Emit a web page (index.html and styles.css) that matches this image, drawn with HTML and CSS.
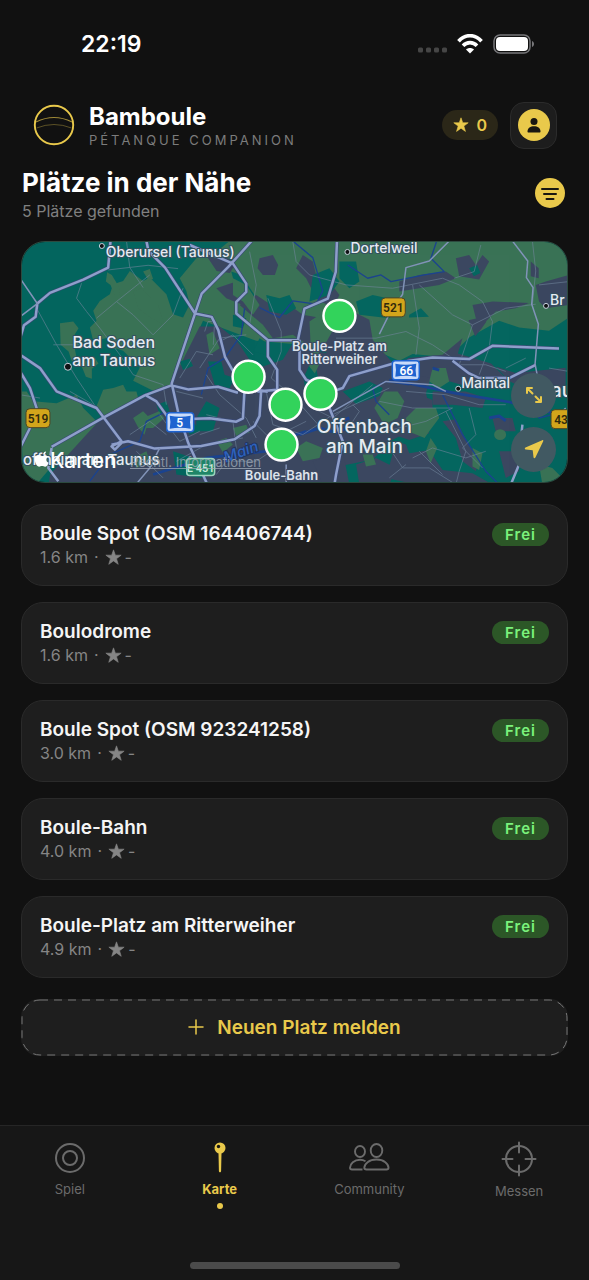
FILE: index.html
```html
<!DOCTYPE html>
<html lang="de">
<head>
<meta charset="utf-8">
<meta name="viewport" content="width=device-width, initial-scale=1">
<title>Bamboule – Plätze in der Nähe</title>
<link rel="stylesheet" href="styles.css">
</head>
<body>
<svg width="0" height="0" class="defs" aria-hidden="true">
  <symbol id="star" viewBox="0 0 16 16"><path d="M8 .8l1.75 5H15.2l-4.35 3.3 1.6 5.3L8 11.2l-4.450 3.2 1.6-5.300L.8 5.800h5.450z" fill="currentColor" stroke="currentColor" stroke-width=".6" stroke-linejoin="round"/></symbol>
</svg>

<div class="status">
  <span class="time">22:19</span>
  <div class="status-icons">
    <svg class="signal" width="30" height="6" viewBox="0 0 30 6" fill="#464646"><rect x="1" y=".5" width="5" height="5" rx="1.500"/><rect x="9" y=".5" width="5" height="5" rx="1.500"/><rect x="17" y=".5" width="5" height="5" rx="1.500"/><rect x="25" y=".5" width="5" height="5" rx="1.500"/></svg>
    <svg width="26" height="20" viewBox="0 0 26 20" fill="none" stroke="#fff" stroke-width="3.600"><path d="M1.500 7.200C8-.2 18 -.2 24.500 7.200M6 11.800c4-4.200 10-4.200 14 0"/><path d="M13 19.500l-4-4.100c2.300-2 5.700-2 8 0z" fill="#fff" stroke="none"/></svg>
    <svg width="42" height="20" viewBox="0 0 42 20"><rect x="1" y="1" width="36" height="18" rx="6" fill="none" stroke="#77777a" stroke-width="1.500"/><rect x="3" y="3" width="32" height="14" rx="4" fill="#fff"/><path d="M39 7c2.700 1 2.700 5 0 6z" fill="#77777a"/></svg>
  </div>
</div>

<header class="header">
  <svg class="logo" width="42" height="42" viewBox="0 0 42 42" fill="none" stroke="#e9c94b"><circle cx="21" cy="21" r="19.200" stroke-width="1.900"/><path d="M3 18q18-9 36 0" stroke-width="1.200" opacity=".65"/><path d="M3.500 24q17.500-7 35 0" stroke-width="1" opacity=".35"/></svg>
  <div class="brand">
    <div class="brand-name">Bamboule</div>
    <div class="brand-sub">PÉTANQUE COMPANION</div>
  </div>
  <div class="points"><svg width="16" height="16"><use href="#star"/></svg><span>0</span></div>
  <button class="profile" aria-label="Profil">
    <svg width="34" height="34" viewBox="0 0 34 34"><circle cx="17" cy="17" r="16" fill="#e9c94b"/><circle cx="17" cy="13.500" r="3.500" fill="#181711"/><path d="M10.500 23.500c0-3.400 3-5.200 6.500-5.200s6.500 1.800 6.500 5.200c0 .6-.4 1-1 1h-11c-.6 0-1-.4-1-1z" fill="#181711"/></svg>
  </button>
</header>

<main class="main">
  <div class="heading">
    <div>
      <h1>Plätze in der Nähe</h1>
      <p>5 Plätze gefunden</p>
    </div>
    <button class="filter" aria-label="Filter">
      <svg width="30" height="30" viewBox="0 0 30 30"><circle cx="15" cy="15" r="15" fill="#e9c94b"/><path d="M7 11h16M9 16h12M11.500 21h7" stroke="#181711" stroke-width="2" stroke-linecap="round"/></svg>
    </button>
  </div>

  <section class="map" aria-label="Karte">
    <svg class="map-canvas" viewBox="0 1 546 240" preserveAspectRatio="xMidYMid slice">
      <g transform="translate(-2 -6) scale(.33333)">
        <rect width="1660" height="760" fill="#04665f"/>
        <g fill="#3a7256">
          <path d="M480 130l50-60 60-20 40-32h420v310H830l-120-10-160-60-40 90-60 110-50 10-60-30 20-40-50-50-30-10-10-30-50 10-10-40 20-20-10-30 20-30 30-20 10-30 30-10 20-30 40 30 20-10 50 50 20 60 30 10 20-40-10-40z"/>
          <path d="M262 112l14 8 24 40-2 20-14 0-12-30-14-10zM340 170l25-10 50 50 20 60-40-20-40-30zM120 265l40-5 16 20-12 20 12 30-14-4 8 44-14 10-10-30-24-20zM182 386l40-20 14 20-20 16 0 30-18-6zM370 110l20-8 10 30-14 4z"/>
          <path d="M0 470l20 0 20 30 70 6 60-26 20 40 40 40 30 40-160 90-60 70-30-20zM280 460l30-10 10 20 30 0 10 40-60 30-50 5-20-30 20-50zM120 720l60-10 30 40h-90z"/>
          <path d="M1020 18h610l20 30v200l-60 40-90-10-60-20-90 50-60 60-110-10-40 20-70-30-50 10z"/>
        </g>
        <g fill="#3b4760">
          <path d="M250 545l200-90 50-100 40-80 60 0 50 40 40 60 40 20 60-20 30-50 40 20 60 10 30-110 40-20 60 30 10 60 60 70 80 0 40 30-20 60 20 80-120 60-60 60-100 20-40 40 40 65H80l10-80z"/>
          <path d="M545 40l40 30 40 0 20 20-14 24-40-6-20-30zM720 70l40-10 16 30-10 30-36 0-16-20zM590 160l60-20 40 30-20 40-50-20zM660 210l50-30 60 40 40-10 40 30 60 10 40-20 40 20-30 80-80 10-60-40-60 10-30-40zM850 60l30 20 10 40 40 20 30 40-20 40-50-30-30-60-30-30zM1140 140l60-20 80-10 30 20-50 20-120 20zM1310 70l40-10 20 30 20-30 20 20-30 54-60-10z"/>
          <path d="M1360 210l60-10 110 4-40 16-60 10-30 30-30-10zM1348 256l26-6 28 10-14 20-20 24zM1535 80l24 20 0 30-24-6zM1550 150l30-10 70-20v90l-70 10-20-20zM1270 360l60-50-14 46 100 30 40 40-30 34-100-10-70-20-110-10 20-50zM1040 440l70 30 80 6 50 20 0 40-40 20 30 40-60 20-60-20-30 60-60-40-90-10-40-50 40-70z"/>
          <path d="M880 680l90-30 20 100h-80zM1010 690l60-20 60 30-20 50h-90zM1130 620l30 10 10 26 60-10 40 60 90 10 60 34h-230l-90-20zM1270 560l40-6 40 80 30 30-10 46-40-30-20-70zM1420 550l60 0 10 40-60 0zM1240 470l100 0 60 20-10 30-90-10-60 0zM1430 395l60 20 150-16v60l-110 10-60-30zM1440 650l60 0 0 60-40 20z"/>
        </g>
        <g fill="#04665f">
          <path d="M635 110l30 10 40 60-10 20-40-14zM640 240l40 10-10 30-30-6zM740 180l40 10 30-10 20 40-30 20-50-10zM880 120l50-20 30 40-30 40-60 20zM565 380l40 0 10 40 30 10-20 40-40-20zM560 500l40 20-20 70-50 0 0-40zM1060 180l90 20-40 50-90-10-10-40zM460 650l60 20 30 60-80-10zM970 470l80-30 40 20-10 24-70 24zM1170 240l35-20 24 26-60 2zM480 380l30-8 10 22-30 12zM870 390l20 10 10 50-40 30-8-50zM960 80l50 0 10 60-30 20-30-30zM1350 100l24-10 10 24-20 10zM720 310l30 20-10 30-40-10zM410 510l30-10 10 30-30 10zM500 570l20-10 20 30-30 10z"/>
        </g>
        <g fill="#3a7256">
          <path d="M340 550l30-20 14 14 34-14 16 20-34 30-20 0-6 20-20-24zM640 130l40 20 40 60-20 30-30-40-30-20zM870 260l60-40 20 50-40 70-36 0zM866 360l30-14 10 30-20 40-16-20zM560 300l20-10 20 50-30 20zM590 620l30-10 20 20-30 24zM1065 520l30-50 40 0 20 30-20 50-40 20zM1160 550l30-30 60 0 10 30-30 40-14 20-50-20zM1220 650l14-40 20 30-20 46zM1030 660l30 0 10 30-30 6zM830 640l30-20 50 20-10 30-50 10zM640 580l40-10 10 24-40 10zM1425 600a18 16 0 1 1 36 0 18 16 0 0 1-36 0zM1560 690l40 10 30 30-60 20zM1360 640l30 16-10 50-20-10zM1240 400l40 0 10 40-30 20-30-20zM340 670l40-20 10 30-40 20z"/>
        </g>
        <g fill="none" stroke="#1b438f" stroke-width="4" stroke-linejoin="round">
          <path d="M820 18l60 50 30 100-20 40-70-10-40 50-60-30M985 90l60 40 40-10 30 20 100-20 60-10-40-40 20-60M545 480l20-80 50-30 50-70 10-80M210 740l60-80 90-40 20-60 60-30M1270 480l60 120 70 110 40 40M1600 540l-40 10-40-60M1110 540l-40-40-10-40 40-20 70 10"/>
          <path d="M400 720l160-50 180-20 60-40 60-20" stroke-width="8"/>
          <path d="M1110 436l60 10 140 30 160 26 160 40" stroke-width="8"/>
          <path d="M840 600l60-20 50 14 80-34M930 570l60-20M1410 550l30-6 20 14M1240 400l20 6" stroke-width="9"/>
        </g>
        <g fill="none" stroke="#71869d" stroke-width="2.500" stroke-linejoin="round" opacity=".7">
          <path d="M185 145l-15 45 30 40 40 50 60 80 40 60 90 30 10 60M50 220l60 110 60 100 60 90M265 105l120-14 90 10M230 250l60-50 100-80M290 200l50 40 60 60 60-60 30-80M320 18l10 80 40 60M100 330l80 0M0 480l60 10M150 470l70 40"/>
          <path d="M820 20l10 60 40 40 110 30 140 10 150-30 50 20 70 50 30 60-10 80-30 80M690 50l20 100-20 120 60 50M745 190l40 100 0 60-30 80 70 60 80 90M1200 150l100 90 60 30-20 60-20 60 80 0 60 20M1360 270l100-50 90-12M1180 150l20 130-10 80M1385 30l-20 80-60 20M950 310l120 0 90-20 80 40 60 40M540 400l60-90 80-10M560 420l40 60 80 70 30 60M740 470l20 100 90 30 90-60 170-80M880 520l60 30 120-100M1000 510l20 20-20 30 20 30M420 540l60 80 60-30M330 600l60-40 50 40M470 680l90-50 110-20M560 540l80 20 10 80-60 80M700 560l60 60 60-10M555 290l10-30 20 0-4 70M600 320l40-20 60 60"/>
          <path d="M1160 470l120 10 100 30 80 0M1080 500l100 20 120 0-80 40-120 30M1350 520l20 80-40 40 60 60M1280 530l60 120-20 60-10 40M1200 650l70 70M1180 670l60-30 100 30 60-20M1110 640l40 60 80 0 80 50M1160 690l-50 40M1520 370l-60 30M1540 18l10 90-10 100M1560 150l90-10M1590 400l60 10M470 470l80 20M480 430l50-80 50 10M600 580l-60 20M350 650l80 80M620 680l90 0 60-40M800 590l60-30"/>
        </g>
        <g fill="none" stroke-linejoin="round">
          <path stroke="#3a4a76" stroke-width="11" d="M272 18l-7 80-75 36-100 40-38 32-5 40-35 25-12 40M380 18l6 30 50 50 90 138-70 210 20 90 30 90 60 130M526 236l20-60 80-80 70-78M510 30l130 56 40 60 0 25-30 30 0 35 95 80h90l20-95 70-30 24-80 6-155M526 236l50 10 20 40 20 80 40 70M745 315l0 50 28 40 0 60-60 5M455 452l-80 30-130 70-150 85M0 360l60 40 50 70 120 50 75 100M375 480l35 20 40 55 120-4 80 10 20-10 5-90 70 10M275 630l50-10 80 22 140-8 100-20 60-40 15-30 5-80M0 640l30-60 20-60-20-60-30-50M840 315l0 90 20 30 80 35 30-10 20-36 140-40 110-16 110 5 70-40 200 8M1300 378l50 38 30 14 90 0 80-40M930 520l40 100-20 100-5 30M455 452l50 12 90-8 60 18"/>
          <path stroke="#8e9fca" stroke-width="7.500" d="M272 18l-7 80-75 36-100 40-38 32-5 40-35 25-12 40M380 18l6 30 50 50 90 138-70 210 20 90 30 90 60 130M526 236l20-60 80-80 70-78M510 30l130 56 40 60 0 25-30 30 0 35 95 80h90l20-95 70-30 24-80 6-155M526 236l50 10 20 40 20 80 40 70M745 315l0 50 28 40 0 60-60 5M455 452l-80 30-130 70-150 85M0 360l60 40 50 70 120 50 75 100M375 480l35 20 40 55 120-4 80 10 20-10 5-90 70 10M275 630l50-10 80 22 140-8 100-20 60-40 15-30 5-80M0 640l30-60 20-60-20-60-30-50M840 315l0 90 20 30 80 35 30-10 20-36 140-40 110-16 110 5 70-40 200 8M1300 378l50 38 30 14 90 0 80-40M930 520l40 100-20 100-5 30M455 452l50 12 90-8 60 18M1510 570l-4 40M1500 690l-25 60M310 620l-25 25-10-10 30-15M95 640l-10 60 30 40"/>
          <path stroke="#8193b8" stroke-width="4.500" d="M1290 18l-60 60-70 20-10 80-40 60-30 60M1480 18l46 60-4 50 20 30-4 50 20 60-10 120 10 50M0 130l52 76-52 40M940 530l160-90 140 10 40 20M1600 560l40-40M340 760l50-60 30-60M800 690l0 60"/>
        </g>
      </g>

      <g class="shield">
        <rect x="4" y="168" width="24" height="19" rx="4" fill="#d3a51b" stroke="#4c4526"/><text x="16" y="182" fill="#322b0c">519</text>
        <rect x="360" y="57" width="24" height="19" rx="4" fill="#d3a51b" stroke="#4c4526"/><text x="372" y="71" fill="#322b0c">521</text>
        <rect x="530" y="169" width="24" height="19" rx="4" fill="#d3a51b" stroke="#4c4526"/><text x="540" y="183" fill="#322b0c">43</text>
        <rect x="145" y="172" width="27" height="19" rx="3" fill="#c9dbfa" stroke="#1e63d0" stroke-width="1.500"/><path d="M148 175q10.500 2 21 0q-1.500 7 0 13q-10.500-2-21 0q1.500-6 0-13z" fill="#1e63d0"/><text x="158" y="186" fill="#fff">5</text>
        <rect x="371" y="120" width="27" height="19" rx="3" fill="#c9dbfa" stroke="#1e63d0" stroke-width="1.500"/><path d="M374 123q10.500 2 21 0q-1.500 7 0 13q-10.500-2-21 0q1.500-6 0-13z" fill="#1e63d0"/><text x="385" y="134" fill="#fff">66</text>
        <rect x="165" y="218" width="28" height="17" rx="3" fill="#1f8567" stroke="#9bd5be" stroke-width="1.500"/><text class="euro" x="179" y="231" fill="#c4ecdc">E 451</text>
      </g>
      <g fill="#101114" stroke="#c8d2dd"><circle cx="80" cy="5" r="2.500"/><circle cx="46" cy="126" r="3.500"/><circle cx="326" cy="11" r="2.500"/><circle cx="525" cy="65" r="2.500"/><circle cx="437" cy="148" r="2.500"/></g>
      <g class="places">
        <text x="84" y="16">Oberursel (Taunus)</text>
        <text x="329" y="12">Dortelweil</text>
        <text x="529" y="64">Br</text>
        <text x="440" y="147">Maintal</text>
        <text class="hofheim" x="1" y="224">offheim am Taunus</text>
        <g class="town"><text x="92" y="107">Bad Soden</text><text x="92" y="125">am Taunus</text></g>
        <g class="city"><text x="343" y="192">Offenbach</text><text x="343" y="212">am Main</text></g>
        <text class="city" x="541" y="156">au</text>
        <text class="river" x="221" y="216" transform="rotate(-20 221 216)">Main</text>
      </g>
      <g class="pins">
        <circle cx="318" cy="75" r="16"/><circle cx="227" cy="136" r="16"/><circle cx="299" cy="153" r="16"/><circle cx="264" cy="164" r="16"/><circle cx="260" cy="204" r="16"/>
      </g>
      <g class="pin-labels"><text x="318" y="110">Boule-Platz am</text><text x="318" y="123">Ritterweiher</text><text x="260" y="239">Boule-Bahn</text></g>
      <path d="M24 215c.5-2 1.500-3 3-3 0 2-1.200 3-3 3zm-1 1.500c1.500 0 2-1 3.500-.800 1 .1 2 .6 2.600 1.500-2.600 1.800-2 5 .6 6-.8 2-2 4-3.600 4-1.200 0-1.700-.7-3-.7s-1.900.7-3 .7c-3 0-6-8-3.300-10.700 2-2 4-.8 6.200 0z" fill="#fff" transform="translate(-3 -1)"/>
      <text class="karten" x="28" y="227">Karten</text>
    </svg>
    <a class="legal" href="#info">Rechtl. Informationen</a>
    <div class="map-controls">
      <button aria-label="Karte vergrößern"><svg width="20" height="20" viewBox="0 0 20 20" fill="none" stroke="#e9c94b" stroke-width="2" stroke-linecap="round" stroke-linejoin="round"><path d="M3 8V3h5M3.500 3.500l5 5M17 12v5h-5M11.500 11.500l5 5"/></svg></button>
      <button aria-label="Mein Standort"><svg width="22" height="22" viewBox="0 0 22 22" fill="#e9c94b"><path d="M19.200 2.200L2.500 9.600c-1 .5-.9 1.800.2 1.900l7 .8.800 7c.2 1.100 1.400 1.200 1.900.2l7.800-16.300c.4-.8-.3-1.300-1-1z"/></svg></button>
    </div>
  </section>

  <ul class="list">
    <li class="card"><div><h2>Boule Spot (OSM 164406744)</h2><p>1.6 km <b>·</b> <svg width="17" height="17"><use href="#star"/></svg> -</p></div><span class="badge">Frei</span></li>
    <li class="card"><div><h2>Boulodrome</h2><p>1.6 km <b>·</b> <svg width="17" height="17"><use href="#star"/></svg> -</p></div><span class="badge">Frei</span></li>
    <li class="card"><div><h2>Boule Spot (OSM 923241258)</h2><p>3.0 km <b>·</b> <svg width="17" height="17"><use href="#star"/></svg> -</p></div><span class="badge">Frei</span></li>
    <li class="card"><div><h2>Boule-Bahn</h2><p>4.0 km <b>·</b> <svg width="17" height="17"><use href="#star"/></svg> -</p></div><span class="badge">Frei</span></li>
    <li class="card"><div><h2>Boule-Platz am Ritterweiher</h2><p>4.9 km <b>·</b> <svg width="17" height="17"><use href="#star"/></svg> -</p></div><span class="badge">Frei</span></li>
  </ul>

  <button class="report">
    <svg class="dashes" aria-hidden="true"><rect width="100%" height="100%" rx="18"/></svg>
    <svg width="16" height="16" viewBox="0 0 16 16" stroke="#e9c94b" stroke-width="1.500" stroke-linecap="round"><path d="M8 1v14M1 8h14"/></svg>
    Neuen Platz melden
  </button>
</main>

<nav class="tabs">
  <div class="tab-row">
    <a href="#spiel"><svg width="34" height="34" viewBox="0 0 34 34" fill="none" stroke="currentColor" stroke-width="2"><circle cx="17" cy="17" r="14"/><circle cx="17" cy="17" r="7"/></svg>Spiel</a>
    <a class="active" href="#karte" aria-current="page"><svg width="34" height="34" viewBox="0 0 34 34"><circle cx="17" cy="7" r="5.500" fill="currentColor"/><circle cx="15.500" cy="5.500" r="1.700" fill="#181711"/><path d="M15.500 12h3l-.4 18c0 1.800-2.200 1.800-2.200 0z" fill="currentColor"/></svg>Karte<i class="dot"></i></a>
    <a href="#community"><svg width="42" height="34" viewBox="0 0 42 34" fill="none" stroke="currentColor" stroke-width="1.900"><ellipse cx="12" cy="10.500" rx="5" ry="5.500"/><ellipse cx="28.500" cy="9.500" rx="5.800" ry="6.500"/><path d="M14.500 28.500H4c-1.500 0-2-.7-2-1.700 0-4 4.200-8 10-8 2.200 0 4 .5 5.500 1.400M18.500 28.500c-1.500 0-2.200-.7-2.200-1.700 0-4 4.700-8.300 12.200-8.300s12 4.300 12 8.300c0 1-.7 1.700-2 1.700z"/></svg>Community</a>
    <a href="#messen"><svg width="36" height="36" viewBox="0 0 36 36" fill="none" stroke="currentColor" stroke-width="2" stroke-linecap="round"><circle cx="18" cy="18" r="13"/><path d="M18 1.500v10M18 24.500v10M1.500 18h10M24.500 18h10"/></svg>Messen</a>
  </div>
</nav>
<div class="home"><span></span></div>
</body>
</html>
```

FILE: styles.css
```css
* { box-sizing: border-box; }

body {
  margin: 0;
  min-height: 100vh;
  display: flex;
  flex-direction: column;
  background: #111;
  color: #fff;
  font-family: Inter, "Liberation Sans", sans-serif;
}

h1, h2, p, ul { margin: 0; padding: 0; }
svg { display: block; flex: none; }
button { border: 0; padding: 0; background: none; font: inherit; color: inherit; }
a { color: inherit; text-decoration: none; }
.defs { position: absolute; }

.status {
  display: flex;
  justify-content: space-between;
  align-items: center;
  height: 88px;
  padding: 0 54px 0 81px;
}
.time { font-size: 23px; font-weight: 600; }
.status-icons { display: flex; align-items: center; gap: 10px; }
.signal { align-self: flex-end; margin-bottom: 1px; }

.header {
  display: flex;
  align-items: center;
  height: 74px;
  padding: 0 32px 0 33px;
}
.brand { margin-left: 14px; flex: 1; padding-top: 1px; }
.brand-name { font-size: 24px; line-height: 28px; font-weight: 700; }
.brand-sub { font-size: 13px; line-height: 18px; letter-spacing: 3px; color: #7c7c7c; }
.points {
  display: flex;
  align-items: center;
  gap: 7px;
  height: 30px;
  padding: 0 11px;
  border-radius: 15px;
  background: #2b2718;
  color: #e9c94b;
  font-size: 16px;
  font-weight: 600;
}
.profile {
  display: grid;
  place-items: center;
  width: 47px;
  height: 47px;
  margin-left: 12px;
  border: 1px solid #2b2b2b;
  border-radius: 14px;
  background: #1d1d1d;
}

.main { flex: 1; padding: 4px 21px 0; }
.heading {
  display: flex;
  justify-content: space-between;
  align-items: center;
  padding: 0 3px 0 1px;
  margin-bottom: 18px;
}
.heading h1 { font-size: 26px; line-height: 34px; font-weight: 700; }
.heading p { font-size: 16px; line-height: 23px; color: #808080; }
.filter { margin-bottom: 3px; }

.map {
  position: relative;
  overflow: hidden;
  border: 1px solid #2c4a3f;
  border-radius: 24px;
  margin-bottom: 21px;
}
.map-canvas { width: 100%; height: auto; }
.shield text { font-size: 12px; font-weight: 600; text-anchor: middle; font-family: Roboto, sans-serif; }
.shield .euro { font-size: 11px; }
.places { font-size: 14px; font-weight: 500; fill: #e6ebf2; paint-order: stroke; stroke: #34505f; stroke-width: 2px; }
.places .hofheim { font-size: 15px; }
.places .town { font-size: 16px; text-anchor: middle; }
.places .city { font-size: 19px; text-anchor: middle; }
.places .river { font-size: 15px; font-style: italic; fill: #2d62bd; stroke: #22345f; text-anchor: middle; }
.pins circle { fill: #32d35b; stroke: #fff; stroke-width: 2.500px; }
.pin-labels { font-size: 13px; font-weight: 600; fill: #dde3ec; text-anchor: middle; paint-order: stroke; stroke: #3c4963; stroke-width: 2px; }
.karten { font-size: 21px; font-weight: 500; fill: #fff; }
.legal {
  position: absolute;
  left: 108px;
  bottom: 12px;
  font-size: 13px;
  line-height: 15px;
  color: #a2acb8;
  opacity: .75;
  text-decoration: underline;
}
.map-controls {
  position: absolute;
  right: 11px;
  bottom: 10px;
  display: grid;
  gap: 9px;
}
.map-controls button {
  display: grid;
  place-items: center;
  width: 45px;
  height: 45px;
  border-radius: 50%;
  background: #415962;
}

.list { display: grid; gap: 16px; list-style: none; margin-bottom: 21px; }
.card {
  display: flex;
  justify-content: space-between;
  align-items: flex-start;
  min-height: 82px;
  padding: 16px 18px;
  border: 1px solid #2a2a2a;
  border-radius: 22px;
  background: #1e1e1e;
}
.card h2 { font-size: 19px; line-height: 25px; font-weight: 600; color: #f5f5f5; }
.card p { display: flex; align-items: center; gap: 3px; font-size: 16px; line-height: 23px; color: #858585; }
.card b { padding: 0 3px; font-weight: 400; }
.badge {
  padding: 0 13px;
  margin-top: 2px;
  border-radius: 12px;
  background: #2c5727;
  color: #7bf27c;
  font-size: 15px;
  line-height: 23px;
  font-weight: 600;
  letter-spacing: 1px;
}

.report {
  position: relative;
  display: flex;
  justify-content: center;
  align-items: center;
  gap: 13px;
  width: 100%;
  height: 57px;
  border-radius: 18px;
  background: #1e1e1e;
  color: #e9c94b;
  font-size: 19px;
  font-weight: 600;
}
.dashes { position: absolute; inset: 0; width: 100%; height: 100%; padding: 1px; overflow: visible; }
.dashes rect { fill: none; stroke: #777; stroke-width: 1px; stroke-dasharray: 8 6; }

.tabs {
  height: 129px;
  padding-top: 15px;
  border-top: 1px solid #262626;
  margin-top: 20px;
  overflow: hidden;
  background: #171717;
}
.tab-row { display: grid; grid-template-columns: repeat(4, 1fr); margin: 0 -5px; }
.tabs a {
  display: flex;
  flex-direction: column;
  align-items: center;
  gap: 6px;
  color: #6b6b6b;
  font-size: 13px;
  line-height: 16px;
}
.tabs .active { color: #e9c94b; font-weight: 700; }
.dot { width: 6px; height: 6px; border-radius: 50%; background: #e9c94b; }
.home { display: flex; justify-content: center; height: 26px; padding-top: 8px; background: #171717; }
.home span { width: 210px; height: 7px; border-radius: 4px; background: #4b4b4b; }
```
